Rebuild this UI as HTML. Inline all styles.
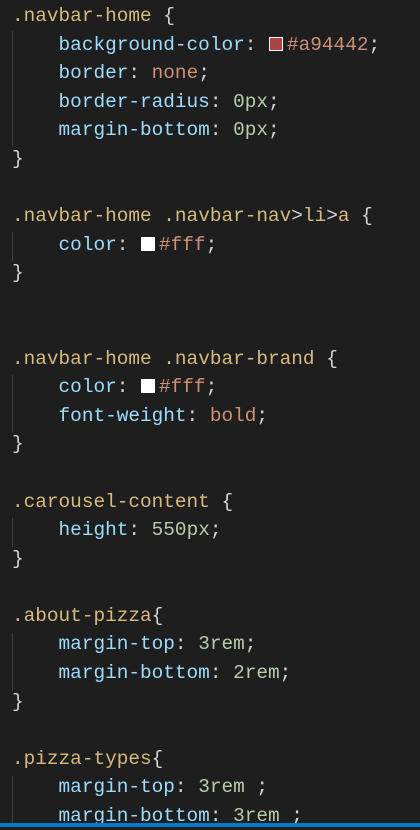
<!DOCTYPE html>
<html><head><style>
html,body{margin:0;padding:0;background:#1e1e1e;width:420px;height:827px;overflow:hidden}
pre{margin:0;position:absolute;top:2px;left:12px;font-family:"Liberation Mono",monospace;font-size:19.4px;line-height:28.57px;color:#d4d4d4}
.s{color:#d7ba7d}.p{color:#9cdcfe}.v{color:#ce9178}.n{color:#b5cea8}
.sw{display:inline-block;width:14px;height:14px;border:1px solid #fff;box-sizing:border-box;margin-right:4px;margin-left:1px;vertical-align:-1px}
.g{position:absolute;left:12px;width:1px;background:#404040}
.bar{position:absolute;left:0;top:823px;width:420px;height:4px;background:#007acc}
</style></head><body>
<div class="g" style="top:31px;height:115px"></div>
<div class="g" style="top:232px;height:29px"></div>
<div class="g" style="top:375px;height:58px"></div>
<div class="g" style="top:518px;height:29px"></div>
<div class="g" style="top:633px;height:58px"></div>
<div class="g" style="top:776px;height:51px"></div>
<pre><span class="s">.navbar-home</span> {
    <span class="p">background-color</span>: <span class="sw" style="background:#a94442"></span><span class="v">#a94442</span>;
    <span class="p">border</span>: <span class="v">none</span>;
    <span class="p">border-radius</span>: <span class="n">0px</span>;
    <span class="p">margin-bottom</span>: <span class="n">0px</span>;
}

<span class="s">.navbar-home</span> <span class="s">.navbar-nav</span>&gt;<span class="s">li</span>&gt;<span class="s">a</span> {
    <span class="p">color</span>: <span class="sw" style="background:#fff"></span><span class="v">#fff</span>;
}


<span class="s">.navbar-home</span> <span class="s">.navbar-brand</span> {
    <span class="p">color</span>: <span class="sw" style="background:#fff"></span><span class="v">#fff</span>;
    <span class="p">font-weight</span>: <span class="v">bold</span>;
}

<span class="s">.carousel-content</span> {
    <span class="p">height</span>: <span class="n">550px</span>;
}

<span class="s">.about-pizza</span>{
    <span class="p">margin-top</span>: <span class="n">3rem</span>;
    <span class="p">margin-bottom</span>: <span class="n">2rem</span>;
}

<span class="s">.pizza-types</span>{
    <span class="p">margin-top</span>: <span class="n">3rem</span> ;
    <span class="p">margin-bottom</span>: <span class="n">3rem</span> ;
</pre>
<div class="bar"></div>
</body></html>
